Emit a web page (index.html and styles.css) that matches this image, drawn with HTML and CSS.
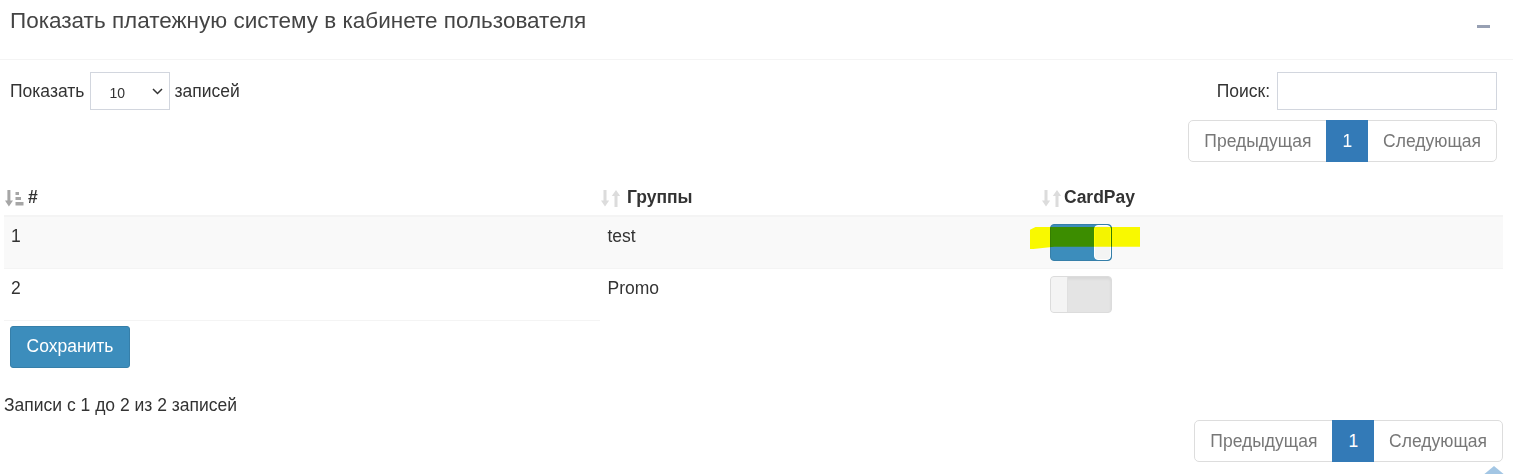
FILE: index.html
```html
<!DOCTYPE html>
<html lang="ru">
<head>
<meta charset="utf-8">
<title>Платежная система</title>
<link rel="stylesheet" href="styles.css">
</head>
<body>
<div class="box">
  <div class="box-header">
    <h3 class="box-title">Показать платежную систему в кабинете пользователя</h3>
    <button class="btn-tool" type="button" aria-label="Свернуть"><span class="minus"></span></button>
  </div>
  <div class="box-body">
    <div class="dt-top">
      <label class="dt-length">Показать
        <span class="select-wrap">
          <select class="select-sm"><option>10</option><option>25</option><option>50</option></select>
          <svg class="chevron" width="11" height="7" viewBox="0 0 11 7"><path d="M1 1l4.5 4.5L10 1" fill="none" stroke="#333" stroke-width="1.5"/></svg>
        </span>
        записей</label>
      <div class="dt-right">
        <label class="dt-filter">Поиск: <input type="search" class="search-input"></label>
        <ul class="pagination">
          <li class="page disabled"><a>Предыдущая</a></li>
          <li class="page active"><a>1</a></li>
          <li class="page disabled"><a>Следующая</a></li>
        </ul>
      </div>
    </div>

    <form class="dt-form">
      <table class="dt-table">
        <colgroup><col class="c1"><col class="c2"><col class="c3"></colgroup>
        <thead>
          <tr>
            <th>
              <svg class="sort-icon" width="19" height="17" viewBox="0 0 19 17"><path d="M2.4 0h3v10.5h2.6L3.9 16.5 0 10.5h2.4z" fill="#a6a6a6"/><rect x="10.5" y="2" width="3.5" height="3" fill="#a6a6a6"/><rect x="10.5" y="7" width="5.5" height="3" fill="#a6a6a6"/><rect x="10.5" y="12" width="8" height="3.5" fill="#a6a6a6"/></svg>
              #</th>
            <th>
              <svg class="sort-icon" width="19" height="17" viewBox="0 0 19 17"><path d="M2.5 0h3v10.5h2.7L4 16.5 0 10.5h2.5z" fill="#dcdcdc"/><path d="M13.5 17h3V6h2.7L15 0 10.8 6h2.7z" fill="#dcdcdc"/></svg>
              Группы</th>
            <th>
              <svg class="sort-icon" width="19" height="17" viewBox="0 0 19 17"><path d="M2.5 0h3v10.5h2.7L4 16.5 0 10.5h2.5z" fill="#dcdcdc"/><path d="M13.5 17h3V6h2.7L15 0 10.8 6h2.7z" fill="#dcdcdc"/></svg>
              CardPay</th>
          </tr>
        </thead>
        <tbody>
          <tr class="odd">
            <td>1</td>
            <td>test</td>
            <td class="toggle-cell">
              <span class="toggle on"><span class="knob"></span></span>
              <span class="marker"></span>
            </td>
          </tr>
          <tr class="even last">
            <td>2</td>
            <td>Promo</td>
            <td class="toggle-cell">
              <span class="toggle off"><span class="knob"></span></span>
            </td>
          </tr>
        </tbody>
      </table>
      <button type="submit" class="btn-save">Сохранить</button>
    </form>

    <div class="dt-bottom">
      <div class="dt-info">Записи с 1 до 2 из 2 записей</div>
      <ul class="pagination">
        <li class="page disabled"><a>Предыдущая</a></li>
        <li class="page active"><a>1</a></li>
        <li class="page disabled"><a>Следующая</a></li>
      </ul>
    </div>
  </div>
</div>
<span class="to-top"></span>
</body>
</html>
```

FILE: styles.css
```css
* { box-sizing: border-box; }

html, body {
  margin: 0;
  padding: 0;
  background: #fff;
}

body {
  font-family: "Liberation Sans", Arial, sans-serif;
  font-size: 17.5px;
  line-height: 25px;
  color: #333;
  overflow: hidden;
  height: 474px;
  position: relative;
}

.box-header {
  display: flex;
  justify-content: space-between;
  align-items: flex-start;
  height: 60px;
  padding: 6px 10px 0 10px;
  border-bottom: 1px solid #f4f4f4;
}

.box-title {
  margin: 0;
  font-size: 22.5px;
  line-height: 30px;
  font-weight: normal;
  color: #444;
}

.btn-tool {
  border: 0;
  background: transparent;
  padding: 0;
  margin: 19px 13px 0 0;
  width: 13px;
  height: 3px;
  display: flex;
}

.minus {
  display: block;
  width: 13px;
  height: 3px;
  background: #97a0b3;
}

.box-body {
  padding: 12px 10px 0 10px;
}

.dt-top {
  display: flex;
  justify-content: space-between;
  align-items: flex-start;
  padding-right: 6px;
}

.dt-length {
  display: flex;
  align-items: center;
  gap: 5px;
  height: 38px;
  font-weight: normal;
}

.select-wrap {
  position: relative;
  display: block;
  width: 80px;
  height: 38px;
  margin: 0 -1px 0 1px;
}

.select-sm {
  appearance: none;
  -webkit-appearance: none;
  width: 80px;
  height: 38px;
  border: 1px solid #d2d6de;
  border-radius: 0;
  background: #fff;
  font-family: "Liberation Sans", Arial, sans-serif;
  font-size: 14px;
  color: #333;
  padding: 4px 0 0 18px;
  margin: 0;
}

.chevron {
  position: absolute;
  right: 7px;
  top: 16px;
}

.dt-right {
  display: flex;
  flex-direction: column;
  align-items: flex-end;
}

.dt-filter {
  display: flex;
  align-items: center;
  gap: 7px;
  font-weight: normal;
}

.search-input {
  width: 220px;
  height: 38px;
  border: 1px solid #d2d6de;
  border-radius: 0;
  margin: 0;
  padding: 0 10px;
  font-size: 17.5px;
}

.pagination {
  display: flex;
  list-style: none;
  margin: 10px 0 0 0;
  padding: 0;
}

.page a {
  display: block;
  padding: 8px 15px;
  line-height: 25px;
  height: 42px;
  border: 1px solid #ddd;
  margin-left: -1px;
  color: #777;
  background: #fff;
}

.page:first-child a {
  margin-left: 0;
  border-radius: 5px 0 0 5px;
}

.page:last-child a {
  border-radius: 0 5px 5px 0;
}

.page.active a {
  background: #337ab7;
  border-color: #337ab7;
  color: #fff;
  padding: 8px 15px;
  position: relative;
}

.dt-form {
  margin: 0;
}

.dt-table {
  border-collapse: collapse;
  margin: 13px 0 0 -6px;
  width: calc(100% + 6px);
  table-layout: fixed;
}

.c1 { width: 596px; }
.c2 { width: 441px; }

.dt-table th {
  position: relative;
  text-align: left;
  font-weight: bold;
  padding: 10px 7.5px 5px 24px;
  border-bottom: 2px solid #f4f4f4;
  color: #333;
}

.dt-table th:nth-child(2) {
  padding-left: 27px;
}

.dt-table th:nth-child(3) {
  padding-left: 23px;
}

.sort-icon {
  position: absolute;
  left: 1px;
  top: 15px;
}

.dt-table td {
  padding: 7px 7.5px 7px;
  vertical-align: top;
  border-top: 1px solid #f4f4f4;
}

.dt-table td:first-child {
  padding-left: 7px;
}

.dt-table tr.odd td {
  background: #f9f9f9;
}

.dt-table tr.last td:first-child {
  border-bottom: 1px solid #f4f4f4;
}

.toggle-cell {
  position: relative;
  padding-left: 9px !important;
}

.toggle {
  position: relative;
  display: block;
  width: 62px;
  height: 37px;
  border-radius: 4px;
  overflow: hidden;
}

.toggle.on {
  background: #3c8dbc;
  border: 1px solid #367fa9;
}

.toggle.off {
  background: #e4e4e4;
  border: 1px solid #dcdcdc;
  box-shadow: inset 0 2px 3px rgba(0,0,0,0.06);
}

.knob {
  position: absolute;
  top: 0;
  bottom: 0;
  width: 17px;
  background: #f4f4f4;
}

.toggle.on .knob {
  right: 0;
  border-radius: 4px;
  border: 1px solid #fff;
}

.toggle.off .knob {
  left: 0;
  border-right: 1px solid #e0e0e0;
}

.marker {
  position: absolute;
  left: -11px;
  top: 10px;
  width: 110px;
  height: 22px;
  background: #ffff00;
  mix-blend-mode: multiply;
  clip-path: polygon(5% 0, 100% 0, 100% 90%, 22% 90%, 3% 100%, 0 100%, 0 12%);
  pointer-events: none;
}

.btn-save {
  display: block;
  margin: 5px 0 0 0;
  height: 42px;
  width: 120px;
  padding: 7px 15px;
  border: 1px solid #367fa9;
  border-radius: 3px;
  background: #3c8dbc;
  color: #fff;
  font-family: "Liberation Sans", Arial, sans-serif;
  font-size: 17.5px;
  line-height: 25px;
}

.dt-bottom {
  margin: 25px 0 0 -6px;
  display: flex;
  flex-direction: column;
}

.dt-info {
  line-height: 25px;
}

.dt-bottom .pagination {
  align-self: flex-end;
  margin-top: 2px;
}

.to-top {
  position: absolute;
  left: 1482px;
  top: 466px;
  width: 0;
  height: 0;
  border-left: 12px solid transparent;
  border-right: 12px solid transparent;
  border-bottom: 10px solid #a3c6e4;
}
```
